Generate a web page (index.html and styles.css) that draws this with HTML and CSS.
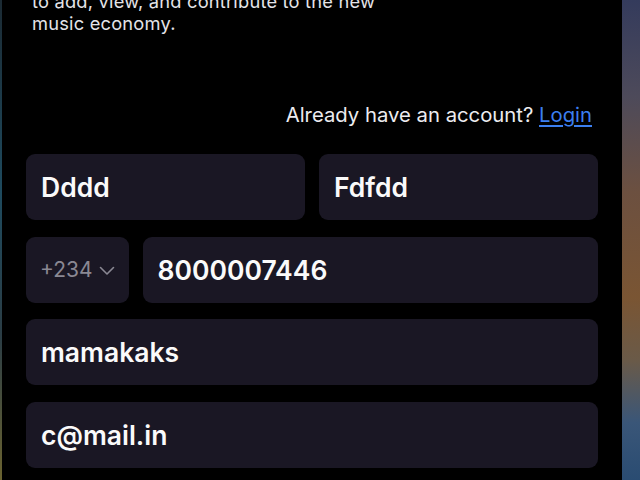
FILE: index.html
```html
<!DOCTYPE html>
<html>
<head>
<meta charset="utf-8">
<link rel="stylesheet" href="styles.css">
</head>
<body>
<div class="screen">
  <div class="edge-left"></div>
  <main class="panel">
    <p class="intro">to add, view, and contribute to the new<br>music economy.</p>
    <p class="have-account">Already have an account? <a class="login" href="#">Login</a></p>
    <form class="form">
      <div class="row">
        <div class="field"><span class="value">Dddd</span></div>
        <div class="field"><span class="value">Fdfdd</span></div>
      </div>
      <div class="row phone-row">
        <div class="field code">
          <span class="code-text">+234</span>
          <svg class="chev" width="16" height="10" viewBox="0 0 16 10"><path d="M1.5 1.5 L8 8 L14.5 1.5" fill="none" stroke="#8a8893" stroke-width="1.6" stroke-linecap="round" stroke-linejoin="round"/></svg>
        </div>
        <div class="field"><span class="value">8000007446</span></div>
      </div>
      <div class="field"><span class="value">mamakaks</span></div>
      <div class="field"><span class="value">c@mail.in</span></div>
    </form>
  </main>
  <div class="edge-right"></div>
</div>
</body>
</html>
```

FILE: styles.css
```css
html, body {
  margin: 0;
  padding: 0;
  background: #000;
  height: 100%;
  overflow: hidden;
}
.screen {
  display: flex;
  width: 640px;
  height: 480px;
  font-family: Inter, "Noto Sans", sans-serif;
}
.edge-left {
  width: 2px;
  background: linear-gradient(180deg, #1b2a33 0%, #1e4a5e 40%, #2b3d45 70%, #6b6330 100%);
}
.edge-right {
  width: 18px;
  background: linear-gradient(180deg, #343b5c 0%, #4d4a5a 20%, #6c5040 40%, #7a5533 62%, #6a5a48 75%, #3a5678 88%, #2a4c72 100%);
}
.panel {
  flex: 1;
  background: #000;
  padding: 0 24px;
  display: flex;
  flex-direction: column;
}
.intro {
  margin: -10px 0 0 6px;
  font-size: 18.3px;
  line-height: 22px;
  color: #e4e4e8;
  letter-spacing: 0.2px;
}
.have-account {
  margin: 69px 6px 0 0;
  text-align: right;
  font-size: 20.3px;
  line-height: 24px;
  color: #ececf0;
}
.login {
  color: #3c7ff0;
  text-decoration: underline;
  text-underline-offset: 3px;
}
.form {
  margin-top: 27px;
  display: flex;
  flex-direction: column;
  gap: 16.5px;
}
.row {
  display: flex;
  gap: 14px;
}
.row .field {
  flex: 1;
}
.phone-row .code {
  flex: 0 0 101px;
  padding: 0 14px;
  gap: 6px;
}
.field {
  height: 66px;
  background: #1a1724;
  border-radius: 9px;
  display: flex;
  align-items: center;
  padding: 0 15px;
  box-sizing: border-box;
}
.value {
  color: #fafafa;
  font-size: 26.5px;
  font-weight: 600;
}
.code-text {
  color: #8a8893;
  font-size: 21px;
  font-weight: 400;
}
.chev {
  display: block;
  margin-top: 2px;
}
```
